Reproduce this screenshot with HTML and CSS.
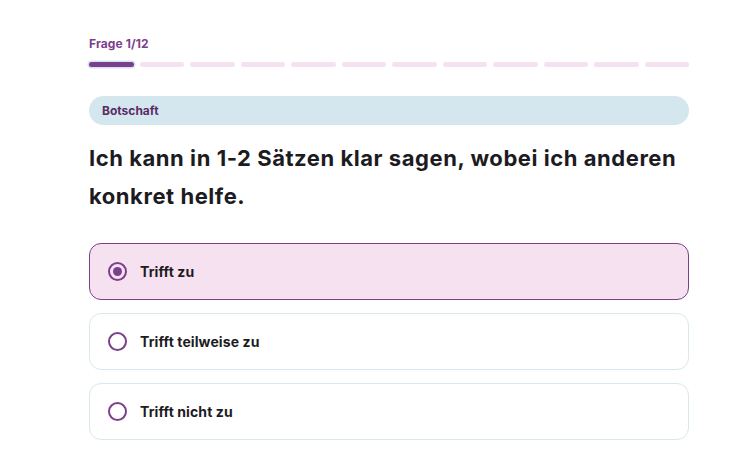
FILE: index.html
```html
<!DOCTYPE html>
<html lang="de">
<head>
  <meta charset="UTF-8" />
  <meta name="viewport" content="width=device-width, initial-scale=1.0" />
  <title>Selbstcheck</title>
  <link rel="stylesheet" href="styles.css">
</head>
<body>

  <!-- Question card -->
  <div class="quiz">

    <!-- Progress -->
    <div class="progress-label">Frage 1/12</div>
    <div class="progress">
      <span class="step active"></span>
      <span class="step"></span>
      <span class="step"></span>
      <span class="step"></span>
      <span class="step"></span>
      <span class="step"></span>
      <span class="step"></span>
      <span class="step"></span>
      <span class="step"></span>
      <span class="step"></span>
      <span class="step"></span>
      <span class="step"></span>
    </div>

    <!-- Category -->
    <div class="category">Botschaft</div>

    <!-- Question text -->
    <h2 class="question">Ich kann in 1-2 Sätzen klar sagen, wobei ich anderen konkret helfe.</h2>

    <!-- Answers -->
    <div class="options">
      <label class="option selected">
        <input type="radio" name="q1" value="3" checked />
        <span class="radio"></span>
        <span class="option-text">Trifft zu</span>
      </label>
      <label class="option">
        <input type="radio" name="q1" value="2" />
        <span class="radio"></span>
        <span class="option-text">Trifft teilweise zu</span>
      </label>
      <label class="option">
        <input type="radio" name="q1" value="1" />
        <span class="radio"></span>
        <span class="option-text">Trifft nicht zu</span>
      </label>
    </div>
  </div>

</body>
</html>
```

FILE: styles.css
```css
/* Page */
body {
  font-family: Inter, "Noto Sans", sans-serif;
  margin: 0;
  background-color: #ffffff;
  color: #1c1b1f;
}

/* Wrapper for the question */
.quiz {
  width: 600px;
  margin-left: 89px;
  padding-top: 36px;
}

/* Progress label */
.progress-label {
  font-size: 12px;
  font-weight: 700;
  color: #7b3f8c;
  line-height: 16px;
  letter-spacing: 0.1px;
}

/* Progress segments */
.progress {
  display: flex;
  gap: 6px;
  margin-top: 10px;
}

.step {
  flex: 1;
  height: 5px;
  border-radius: 3px;
  background-color: #f5e1f0;
}

.step.active {
  background-color: #7b3f8c;
  box-shadow: 0 0 0 1.5px #d4e7ee;
}

/* Category pill */
.category {
  margin-top: 29px;
  height: 29px;
  line-height: 29px;
  padding: 0 13px;
  border-radius: 15px;
  background-color: #d4e7ee;
  color: #5b2b66;
  font-size: 12px;
  font-weight: 700;
}

/* Question */
.question {
  margin: 14px 0 0;
  font-size: 22px;
  font-weight: 700;
  line-height: 38px;
  letter-spacing: 0.55px;
  color: #1c1b1f;
}

/* Answer list */
.options {
  display: flex;
  flex-direction: column;
  gap: 13px;
  margin-top: 28px;
}

.option {
  display: flex;
  align-items: center;
  gap: 13px;
  height: 57px;
  box-sizing: border-box;
  padding: 0 18px;
  border: 1px solid #d8e8ec;
  border-radius: 12px;
  background-color: #ffffff;
  cursor: pointer;
}

.option.selected {
  border-color: #7b3f8c;
  background-color: #f5e1f0;
}

.option input {
  display: none;
}

/* Custom radio circle */
.radio {
  width: 19px;
  height: 19px;
  box-sizing: border-box;
  border: 2px solid #7b3f8c;
  border-radius: 50%;
  display: flex;
  justify-content: center;
  align-items: center;
}

.option.selected .radio::after {
  content: "";
  width: 9px;
  height: 9px;
  border-radius: 50%;
  background-color: #7b3f8c;
}

.option-text {
  font-size: 14px;
  font-weight: 700;
  letter-spacing: 0.1px;
}
```
